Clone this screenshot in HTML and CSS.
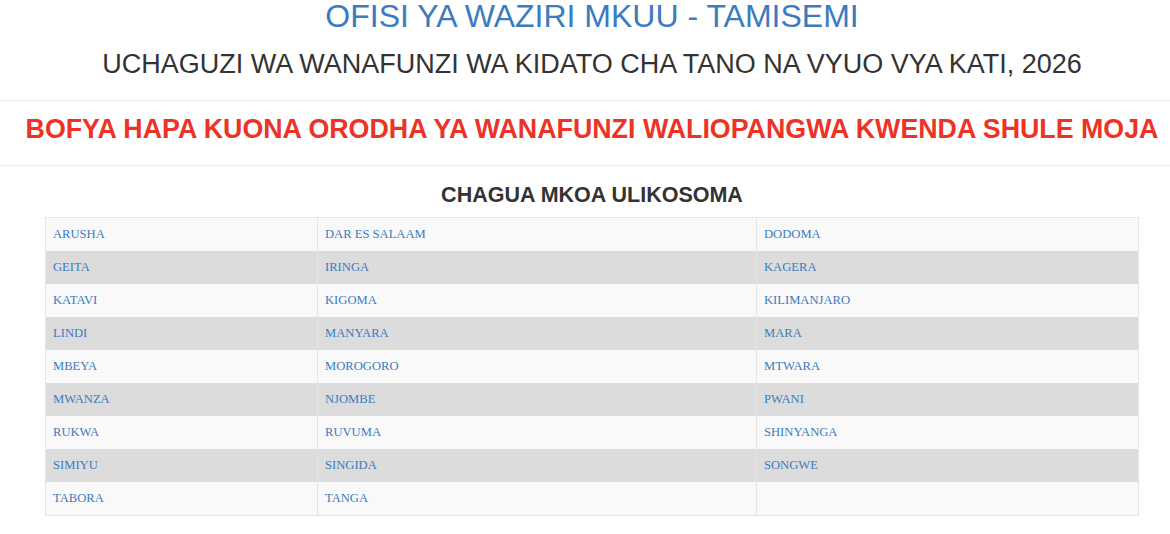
FILE: index.html
```html
<!DOCTYPE html>
<html lang="sw">
<head>
    <meta charset="UTF-8">
    <title>Uchaguzi wa Kidato cha Tano 2026</title>
    <link rel="stylesheet" href="styles.css">
</head>
<body>
    <div class="page">
        <h1 class="title">OFISI YA WAZIRI MKUU - TAMISEMI</h1>
        <h2 class="subtitle">UCHAGUZI WA WANAFUNZI WA KIDATO CHA TANO NA VYUO VYA KATI, 2026</h2>
        <hr>
        <h2 class="notice"><a href="#">BOFYA HAPA KUONA ORODHA YA WANAFUNZI WALIOPANGWA KWENDA SHULE MOJA</a></h2>
        <hr>
        <h3 class="pick">CHAGUA MKOA ULIKOSOMA</h3>

        <table class="regions">
            <tr><td><a href="#">ARUSHA</a></td><td><a href="#">DAR ES SALAAM</a></td><td><a href="#">DODOMA</a></td></tr>
            <tr><td><a href="#">GEITA</a></td><td><a href="#">IRINGA</a></td><td><a href="#">KAGERA</a></td></tr>
            <tr><td><a href="#">KATAVI</a></td><td><a href="#">KIGOMA</a></td><td><a href="#">KILIMANJARO</a></td></tr>
            <tr><td><a href="#">LINDI</a></td><td><a href="#">MANYARA</a></td><td><a href="#">MARA</a></td></tr>
            <tr><td><a href="#">MBEYA</a></td><td><a href="#">MOROGORO</a></td><td><a href="#">MTWARA</a></td></tr>
            <tr><td><a href="#">MWANZA</a></td><td><a href="#">NJOMBE</a></td><td><a href="#">PWANI</a></td></tr>
            <tr><td><a href="#">RUKWA</a></td><td><a href="#">RUVUMA</a></td><td><a href="#">SHINYANGA</a></td></tr>
            <tr><td><a href="#">SIMIYU</a></td><td><a href="#">SINGIDA</a></td><td><a href="#">SONGWE</a></td></tr>
            <tr><td><a href="#">TABORA</a></td><td><a href="#">TANGA</a></td><td></td></tr>
        </table>
    </div>
</body>
</html>
```

FILE: styles.css
```css
body {
    margin: 0;
    background: #fff;
    font-family: "Liberation Sans", Arial, sans-serif;
    color: #333;
}

.page {
    padding-left: 14px;
}

h1, h2, h3 {
    margin: 0;
    text-align: center;
    line-height: 1.1;
    font-weight: normal;
}

.title {
    font-size: 32px;
    line-height: 1;
    color: #3b7bbf;
}

.subtitle {
    margin-top: 18px;
    font-size: 27px;
    color: #333;
}

hr {
    margin: 20px 0 0 -14px;
    border: 0;
    border-top: 1px solid #eee;
}

.notice {
    margin-top: 14px;
    font-size: 26.8px;
    font-weight: bold;
}

.notice a {
    color: #ec3326;
    text-decoration: none;
}

.notice + hr {
    margin-top: 21px;
}

.pick {
    margin-top: 18px;
    font-size: 21.5px;
    font-weight: bold;
}

.regions {
    width: 1094px;
    margin: 9px auto 0 31px;
    border-collapse: collapse;
    border: 1px solid #e5e5e5;
    font-family: "Liberation Serif", "Times New Roman", serif;
    font-size: 12.6px;
}

.regions td {
    height: 33px;
    padding: 0 7px;
    border-left: 1px solid #e5e5e5;
    border-right: 1px solid #e5e5e5;
    vertical-align: middle;
}

.regions td:nth-child(1) { width: 257px; }
.regions td:nth-child(2) { width: 424px; }

.regions tr:nth-child(odd) { background: #f9f9f9; }
.regions tr:nth-child(even) { background: #dcdcdc; }

.regions a {
    color: #3b7bbf;
    text-decoration: none;
}
```
